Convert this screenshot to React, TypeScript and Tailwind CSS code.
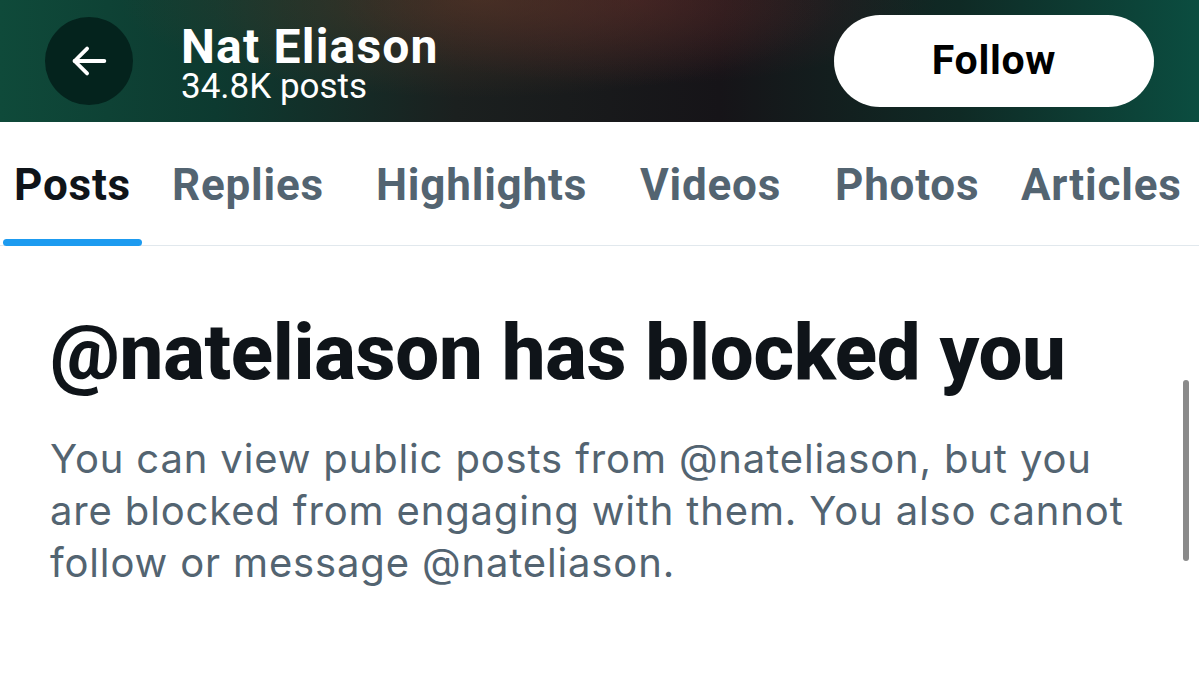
import React from 'react';

// widths follow the spacing of the tab strip in the screenshot
const TABS: { label: string; width: string }[] = [
    { label: 'Posts', width: 'w-[158px]' },
    { label: 'Replies', width: 'w-[204px]' },
    { label: 'Highlights', width: 'w-[264px]' },
    { label: 'Videos', width: 'w-[195px]' },
    { label: 'Photos', width: 'w-[186px]' },
    { label: 'Articles', width: 'w-[178px]' },
];

function BackArrow() {
    return (<svg width="46" height="46" viewBox="0 0 24 24" fill="none" stroke="white" strokeWidth="2" strokeLinecap="round" strokeLinejoin="round">
      <path d="M20 12H4.5"/>
      <path d="M11 5.5 4.5 12l6.5 6.5"/>
    </svg>);
}

export default function App() {
    return (<div className="relative h-[673px] w-[1199px] overflow-hidden bg-white font-['Roboto','Liberation_Sans',sans-serif]">
      {/* Header */}
      <div className="flex h-[122px] items-center bg-[radial-gradient(ellipse_30%_80%_at_40%_0%,rgba(95,60,40,0.55),transparent),radial-gradient(ellipse_25%_70%_at_53%_0%,rgba(85,30,40,0.5),transparent),linear-gradient(90deg,#0f4a3a_0%,#0d3a30_18%,#1b201f_38%,#161418_60%,#0f2a25_80%,#0b4d40_100%)] pl-[45px] pr-[45px]">
        <div className="flex h-[88px] w-[88px] shrink-0 items-center justify-center rounded-full bg-[#04231d]">
          <BackArrow />
        </div>
        <div className="mt-[6px] ml-[48px] flex flex-col">
          <span className="text-[48px] leading-[46px] font-bold tracking-[1.2px] text-white">Nat Eliason</span>
          <span className="text-[35px] leading-[34px] text-white">34.8K posts</span>
        </div>
        <button className="ml-auto flex h-[92px] w-[320px] items-center justify-center rounded-full bg-white text-[41px] font-bold tracking-[0.7px] text-black">
          Follow
        </button>
      </div>

      {/* Tabs */}
      <div className="flex h-[124px] border-b border-[#e1e8ed] pl-[14px]">
        {TABS.map((tab, i) => (<div key={tab.label} className={`relative flex h-full shrink-0 items-center pt-[2px] ${tab.width}`}>
            <span className={`text-[44px] font-bold tracking-[0.8px] ${i === 0 ? 'text-[#0f1419]' : 'text-[#536471]'}`}>{tab.label}</span>
            {i === 0 && (<div className="absolute bottom-[-1px] left-[-11px] h-[7px] w-[139px] rounded-full bg-[#1d9bf0]"/>)}
          </div>))}
      </div>

      {/* Blocked message */}
      <div className="pl-[50px] pt-[67px]">
        <h1 className="text-[78px] leading-[80px] font-extrabold tracking-[-0.3px] whitespace-nowrap text-[#0f1419]">@nateliason has blocked you</h1>
        <p className="mt-[40px] font-['Inter','Roboto',sans-serif] text-[40px] leading-[52px] tracking-[0.85px] whitespace-nowrap text-[#536471]">
          You can view public posts from @nateliason, but you<br />
          are blocked from engaging with them. You also cannot<br />
          follow or message @nateliason.
        </p>
      </div>

      {/* Scrollbar */}
      <div className="absolute left-[1183px] top-[380px] h-[181px] w-[6px] rounded-full bg-[#8a8a8a]"/>
    </div>);
}
